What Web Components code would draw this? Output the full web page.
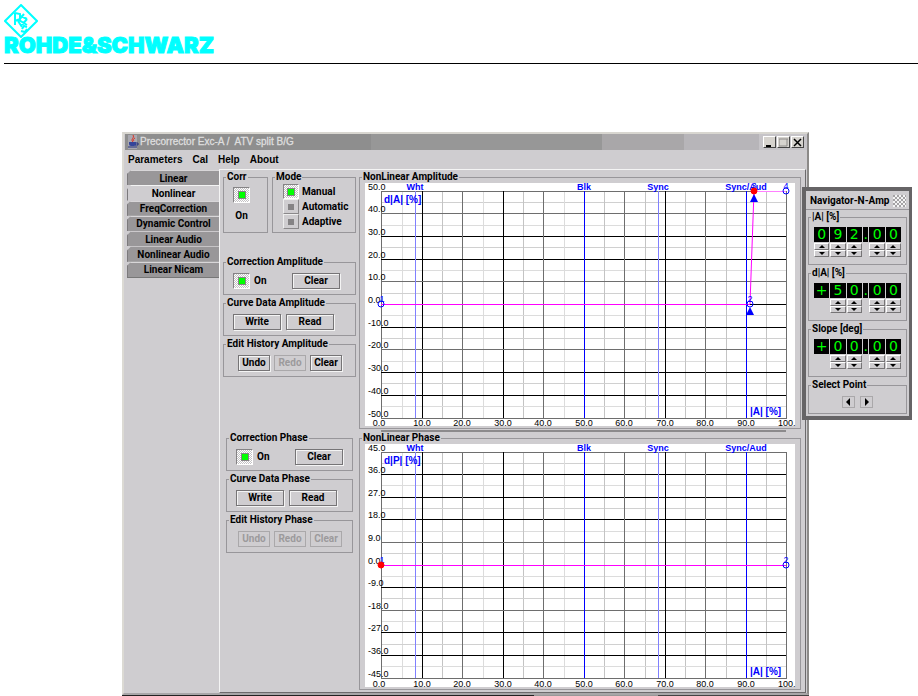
<!DOCTYPE html>
<html lang="en">
<head>
<meta charset="utf-8">
<title>Precorrector</title>
<style>
  body { margin: 0; background: #fff; color: #000; font: bold 10px/12px Roboto, "Liberation Sans", sans-serif; --face: #cfcdd0; --line: #98969a; --arial: "Liberation Sans", Arial, sans-serif; overflow: hidden; }
  main { position: relative; margin: 68px 109px 0 122px; }
  .group-row { display: flex; gap: 4px; }
  .side { display: flex; flex-direction: column; gap: 2px; padding: 0 3px; }
  .side.narrow { padding: 0 6px; }
  .tall { margin-bottom: 21px; }
  .row { display: flex; align-items: center; gap: 5px; padding: 5px 9px; }
  .row.end { justify-content: space-between; padding-right: 15px; }
  .narrow .row.end { padding-right: 9px; }
  .row.three { padding: 5px 0 5px 14px; gap: 4px; }
  .narrow .row.three { padding-left: 11px; }
  .corr { padding: 4px 9px 0; height: 45px; }
  .modes { padding: 0 0 0 10px; height: 49px; }
  .points { display: flex; justify-content: center; gap: 5px; padding: 5px 0; }
  nl-navigator { position: absolute; top: 55px; left: calc(100% - 7px); width: 110px; }
</style>
</head>
<body>
<rs-header></rs-header>
<main>
  <app-window caption="Precorrector Exc-A /  ATV split B/G">
    <menu-bar slot="menu" items="Parameters,Cal,Help,About"></menu-bar>
    <tab-list slot="tabs" selected="1" items="Linear,Nonlinear,FreqCorrection,Dynamic Control,Linear Audio,Nonlinear Audio,Linear Nicam"></tab-list>

    <div class="side">
      <div class="group-row tall">
        <group-box label="Corr" style="width:45px"><div class="corr"><led-toggle label="On" checked stacked></led-toggle></div></group-box>
        <group-box label="Mode" style="flex:1"><div class="modes"><mode-choice items="Manual,Automatic,Adaptive"></mode-choice></div></group-box>
      </div>
      <group-box label="Correction Amplitude"><div class="row end"><led-toggle label="On" checked></led-toggle><push-button wide>Clear</push-button></div></group-box>
      <group-box label="Curve Data Amplitude"><div class="row"><push-button wide>Write</push-button><push-button wide>Read</push-button></div></group-box>
      <group-box label="Edit History Amplitude"><div class="row three"><push-button>Undo</push-button><push-button disabled>Redo</push-button><push-button>Clear</push-button></div></group-box>
    </div>
    <nl-chart label="NonLinear Amplitude" unit="d|A| [%]" step="10" height="227" grays="0,2,8,14,20"
      points="0,0;91,0;92,50;100,50" active="3" arrows="2,3" divider></nl-chart>

    <div class="side narrow">
      <group-box label="Correction Phase"><div class="row end"><led-toggle label="On" checked></led-toggle><push-button wide>Clear</push-button></div></group-box>
      <group-box label="Curve Data Phase"><div class="row"><push-button wide>Write</push-button><push-button wide>Read</push-button></div></group-box>
      <group-box label="Edit History Phase"><div class="row three"><push-button disabled>Undo</push-button><push-button disabled>Redo</push-button><push-button disabled>Clear</push-button></div></group-box>
    </div>
    <nl-chart label="NonLinear Phase" unit="d|P| [%]" step="9" height="226" grays="0,8,14,20"
      points="0,0;100,0" active="1"></nl-chart>
  </app-window>

  <nl-navigator caption="Navigator-N-Amp">
    <group-box label="|A| [%]"><digit-field value="092.00"></digit-field></group-box>
    <group-box label="d|A| [%]"><digit-field value="+50.00"></digit-field></group-box>
    <group-box label="Slope [deg]"><digit-field value="+00.00"></digit-field></group-box>
    <group-box label="Select Point"><div class="points"><arrow-button dir="left"></arrow-button><arrow-button dir="right"></arrow-button></div></group-box>
  </nl-navigator>
</main>

<script>
class Base extends HTMLElement {
  connectedCallback() {
    if (this.shadowRoot) return;
    this.attachShadow({ mode: 'open' }).innerHTML = '<style>*{box-sizing:border-box}' + this.css() + '</style>' + this.html();
  }
  attr(n) { return this.getAttribute(n) || ''; }
  list(n) { return this.attr(n).split(','); }
  has(n) { return this.hasAttribute(n); }
}

customElements.define('rs-header', class extends Base {
  css() { return `
    :host { display: block; margin-left: 4px; padding-top: 4px; height: 64px; box-sizing: border-box; border-bottom: 1px solid #000; color: #0ff; }
    svg { display: block; }
    div { font: 900 22px/20px Inter, "Liberation Sans", sans-serif; margin-top: -3px; white-space: nowrap; -webkit-text-stroke: 1px; }`; }
  html() { return `
    <svg width="34" height="34" viewBox="0 0 34 34" fill="none" stroke="#0ff" aria-hidden="true">
      <path d="M17 1 33 17 17 33 1 17Z" stroke-width="2"/>
      <path d="M11 9v12M11 9l5 1v5l-5 2M14 17l4 6M20 10l-5 6 8 5M23 15l-5 6M17 12l6 3" stroke-width="2"/>
      <path d="M23 23l-3-1-2 3M23 25l-2 3-4-1" stroke-width="2"/>
    </svg><div>ROHDE&amp;SCHWARZ</div>`; }
});

customElements.define('app-window', class extends Base {
  css() { return `
    :host { display: block; }
    .win { background: var(--face); border: 2px solid; border-color: #d8d6d0 #8c8a88 #a8a6a8 #dcdad4; }
    header { display: flex; align-items: center; height: 16px; padding: 0 3px 0 2px; margin: 0 0 0 1px; color: #dedede; font: 10px/16px var(--arial);
      background: linear-gradient(90deg, #8e8e8e 0 36%, #979797 36% 70%, #a9a7a9 70% 82%, #b7b5b9 82% 93%, #c6c4c8 93%); }
    header svg { flex: none; margin-right: 1px; }
    h1 { flex: 1; margin: 0; font: inherit; white-space: pre; -webkit-text-stroke: 0.3px; }
    header button { width: 13px; height: 12px; padding: 0; margin-left: 1px; background: #d6d3ce; border: 1px solid; border-color: #fff #444 #444 #fff; display: grid; place-items: center; }
    .body { display: grid; grid-template-columns: 95px 1fr; }
    .content { display: grid; grid-template-columns: 139px 1fr; margin-right: 1px; padding: 1px 4px 2px 0; border: 1px solid; border-color: #f4f4f4 #6c6a6c #6c6a6c #f4f4f4; }
    .foot { height: 1px; background: linear-gradient(90deg, #222 0 60%, #999 60% 78%, #444 78%); }`; }
  html() {
    const b = (n, p) => `<button aria-label="${n}"><svg width="9" height="9" viewBox="0 0 9 9" fill="none" stroke="#000" style="margin:0">${p}</svg></button>`;
    return `<div class="win"><header>
      <svg width="12" height="14" viewBox="0 0 12 14" aria-hidden="true"><path d="M1 0h9v14H1z" fill="#a8a8b0"/><path d="M6 0C8 3 3 4 6 7M8 3C6 4 6 5 7 6" stroke="#e03020" fill="none"/><path d="M2 7h7v2q0 2-2 2H4q-2 0-2-2z" fill="#35459a"/><path d="M9 8h2v2H8M1 12h9" stroke="#24307c" fill="none"/></svg>
      <h1>${this.attr('caption')}</h1>
      ${b('Minimize', '<path d="M1 8h5" stroke-width="2"/>')}${b('Maximize', '<path d="M0 1h9M0 1v7h8V1" stroke="#8c8a88" stroke-width="1"/>')}${b('Close', '<path d="M1 1l7 7M8 1l-7 7" stroke-width="1.5"/>')}
      </header><slot name="menu"></slot>
      <div class="body"><slot name="tabs"></slot><section class="content"><slot></slot></section></div></div><div class="foot"></div>`; }
});

customElements.define('menu-bar', class extends Base {
  css() { return `
    :host { display: block; }
    nav { display: flex; gap: 10px; height: 19px; padding-left: 4px; }
    button { all: unset; font: bold 10px/20px var(--arial); }`; }
  html() { return `<nav>${this.list('items').map(t => `<button>${t}</button>`).join('')}</nav>`; }
});

customElements.define('tab-list', class extends Base {
  css() { return `
    :host { display: block; padding: 1px 0 0 3px; }
    div { display: flex; flex-direction: column; height: 108px; border-bottom: 1px solid #777; }
    button { flex: 1; border: 0; border-top: 1px solid #d8d6d8; border-left: 1px solid #7c7a7c; padding: 1px 0 0; background: #999799; font: inherit; color: #000; clip-path: polygon(4px 0, 100% 0, 100% 100%, 0 100%, 0 4px); }
    button[aria-selected=true] { background: var(--face); border-top-color: #fff; }`; }
  html() { return `<div role="tablist">${this.list('items').map((t, i) => `<button role="tab" aria-selected="${i == this.attr('selected')}">${t}</button>`).join('')}</div>`; }
});

customElements.define('group-box', class extends Base {
  css() { return `
    :host { display: block; }
    fieldset { margin: 0; padding: 0; border: 1px solid var(--line); min-width: 0; }
    legend { margin-left: 2px; padding: 0 1px; height: 12px; white-space: nowrap; }`; }
  html() { return `<fieldset><legend>${this.attr('label')}</legend><slot></slot></fieldset>`; }
});

const ledCss = `
  label { display: flex; align-items: center; gap: 4px; }
  input { appearance: none; flex: none; margin: 0; width: 16px; height: 15px; border: 1px solid; border-color: #eee #8a888a #8a888a #eee; background: linear-gradient(#858385, #858385) center / 6px 6px no-repeat var(--face); }
  input:checked { border-color: #858385 #fff #fff #858385; background: linear-gradient(#0f0, #0f0) center / 6px 6px no-repeat, linear-gradient(#858385, #858385) center / 8px 8px no-repeat, repeating-conic-gradient(#fff 0 25%, #c4c2c4 0 50%) 0 0 / 2px 2px; }`;

customElements.define('led-toggle', class extends Base {
  css() { return `:host { display: block; } ${ledCss} input { width: 17px; height: 16px; } .stacked { display: inline-flex; flex-direction: column; gap: 7px; }`; }
  html() { return `<label class="${this.has('stacked') ? 'stacked' : ''}"><input type="checkbox" ${this.has('checked') ? 'checked' : ''}>${this.attr('label')}</label>`; }
});

customElements.define('mode-choice', class extends Base {
  css() { return `:host { display: block; } ${ledCss} label { gap: 3px; } div { display: flex; flex-direction: column; padding-top: 1px; }`; }
  html() { return `<div>${this.list('items').map((t, i) => `<label><input type="radio" name="mode" ${i ? '' : 'checked'}>${t}</label>`).join('')}</div>`; }
});

customElements.define('push-button', class extends Base {
  css() { return `
    :host { display: block; }
    button { display: block; width: 32px; height: 16px; padding: 0; background: var(--face); border: 1px solid #767476; box-shadow: inset 1px 1px #f4f4f4, 1px 1px #f4f4f4; font: inherit; line-height: 12px; color: #000; }
    button.wide { width: 48px; }
    button:disabled { color: #9c9a9c; border-color: #aaa8aa; box-shadow: none; }`; }
  html() { return `<button class="${this.has('wide') ? 'wide' : ''}" ${this.has('disabled') ? 'disabled' : ''}><slot></slot></button>`; }
});

customElements.define('arrow-button', class extends Base {
  css() { return `
    :host { display: block; }
    button { display: grid; place-items: center; width: 13px; height: 12px; padding: 0; background: var(--face); border: 1px solid; border-color: #fff #767476 #767476 #fff; outline: 1px solid #aaa8aa; outline-offset: -1px; }`; }
  html() {
    const left = this.attr('dir') == 'left';
    return `<button aria-label="${left ? 'Previous' : 'Next'} point"><svg width="5" height="8" viewBox="0 0 5 8"><path d="${left ? 'M4 0v8L0 4z' : 'M1 0v8l4-4z'}"/></svg></button>`; }
});

customElements.define('digit-field', class extends Base {
  css() { return `
    :host { display: block; padding: 4px 5px 7px; }
    div { display: flex; gap: 1px; }
    span { display: flex; flex-direction: column; width: 16px; }
    span.dot { width: 6px; }
    b { height: 15px; margin-bottom: 1px; background: #000; color: #0f0; font: 14px/15px "DejaVu Sans", sans-serif; display: flex; justify-content: center; }
    button { height: 7px; padding: 0; background: var(--face); border: 1px solid; border-color: #fff #767476 #767476 #fff; display: grid; place-items: center; }
    svg { display: block; }`; }
  html() {
    return '<div>' + [...this.attr('value')].map(c => {
      const btn = (n, d) => `<button aria-label="${n}"><svg width="6" height="3" viewBox="0 0 6 3"><path d="${d}"/></svg></button>`;
      const num = c >= '0' && c <= '9';
      return `<span class="${c == '.' ? 'dot' : ''}"><b>${c}</b>${num ? btn('Up', 'M0 3h6L3 0z') + btn('Down', 'M0 0h6L3 3z') : ''}</span>`;
    }).join('') + '</div>'; }
});

customElements.define('nl-navigator', class extends Base {
  css() { return `
    :host { display: block; box-sizing: border-box; background: var(--face); border: 4px solid #666466; border-right-width: 3px; }
    header { display: flex; justify-content: space-between; height: 19px; padding: 4px 3px 0 4px; border-bottom: 1px solid #98969a; white-space: nowrap; }
    i { width: 13px; height: 12px; background: repeating-conic-gradient(#f4f4f4 0 25%, #a4a2a4 0 50%) 0 0 / 4px 4px; }
    section { display: flex; flex-direction: column; gap: 2px; padding: 1px 2px 2px; }`; }
  html() { return `<header>${this.attr('caption')}<i></i></header><section><slot></slot></section>`; }
});

customElements.define('nl-chart', class extends Base {
  css() { return `
    :host { display: block; }
    .plot { padding: 0 5px 2px; }
    svg { display: block; width: 100%; background: #fff; overflow: visible; }
    text { font: 9px var(--arial); fill: #000; }
    .tag { font-weight: bold; fill: #00f; text-anchor: middle; }
    .unit { font-weight: bold; font-size: 10px; fill: #00f; }
    .pt { fill: #00f; text-anchor: middle; }
    .x { text-anchor: middle; }
    hr { height: 2px; border: 0; margin: 1px 15px 0 22px; background: #8c8a8c; }`; }
  html() {
    const H = +this.attr('height'), step = +this.attr('step'), grays = this.list('grays').map(Number);
    const X = p => Math.ceil(16 + 4.05 * p), rowY = i => Math.floor(8 + H / 20 * i), bottom = rowY(20);
    const Y = v => Math.round(rowY(10) - v / step * H / 10);
    const rect = (x, y, w, h, c) => `<rect x="${x}" y="${y}" width="${w}" height="${h}" fill="${c}"/>`;
    let g = '';
    for (const odd of [1, 0]) for (let i = odd; i <= 20; i += 2) {
      g += rect(16, rowY(i), 405, 1, odd ? (i % 4 == 1 ? '#d0d0d0' : '#dcdcdc') : grays.includes(i) ? '#6e6e6e' : '#000');
      g += rect(X(i * 5), 8, 1, bottom - 7, odd ? (i < 10 && i % 4 == 1 ? '#dcdcdc' : '#c4c4c4') : i % 4 == 2 ? '#000' : '#6e6e6e');
    }
    g += rect(50, 8, 1, bottom - 8, '#8080ff') + rect(293, 8, 1, bottom - 8, '#8080ff');
    g += rect(219, 8, 1, bottom - 8, '#00f') + rect(381, 8, 1, bottom - 8, '#00f');
    for (let i = 0; i <= 10; i++) {
      g += `<text x="3" y="${rowY(i * 2) - 1}">${((5 - i) * step).toFixed(1)}</text>`;
      g += i == 10 ? '<text x="413" y="243">100.</text>' : `<text class="x" x="${i ? X(i * 10) : 14}" y="243">${i * 10}.0</text>`;
    }
    [['Wht', 50], ['Blk', 219], ['Sync', 293], ['Sync/Aud', 381]].forEach(([t, x]) => g += `<text class="tag" x="${x}" y="7">${t}</text>`);
    g += `<text class="unit" x="19" y="20">${this.attr('unit')}</text><text class="unit" x="385" y="${bottom - 3}">|A| [%]</text>`;
    const pts = this.attr('points').split(';').map(p => { const [a, b] = p.split(',').map(Number); return [X(a), Y(b)]; });
    for (let i = 1; i < pts.length; i++) {
      const [a, b] = pts[i - 1], [c, d] = pts[i];
      g += b == d ? rect(a, b, c - a, 1, b < 20 ? '#ff80ff' : '#f0f') : `<path d="M${a} ${b}L${c} ${d}" stroke="#f0f"/>`;
    }
    const arrows = this.list('arrows').map(Number);
    pts.forEach(([x, y], i) => {
      const n = i + 1, on = n == this.attr('active');
      if (arrows.includes(n)) g += `<path d="M${x} ${y + 3}l4 8h-8z" fill="#00f"/>`;
      g += `<text class="pt" x="${x + (i ? 0 : 1)}" y="${y - 2}">${n}</text><circle cx="${x}" cy="${y}" r="3" fill="${on ? 'red' : 'none'}" stroke="${on ? 'red' : '#00f'}"/>`;
    });
    return `<group-box label="${this.attr('label')}"><div class="plot"><svg viewBox="0 0 430 243">${g}</svg></div></group-box>${this.has('divider') ? '<hr>' : ''}`;
  }
});
</script>
</body>
</html>
